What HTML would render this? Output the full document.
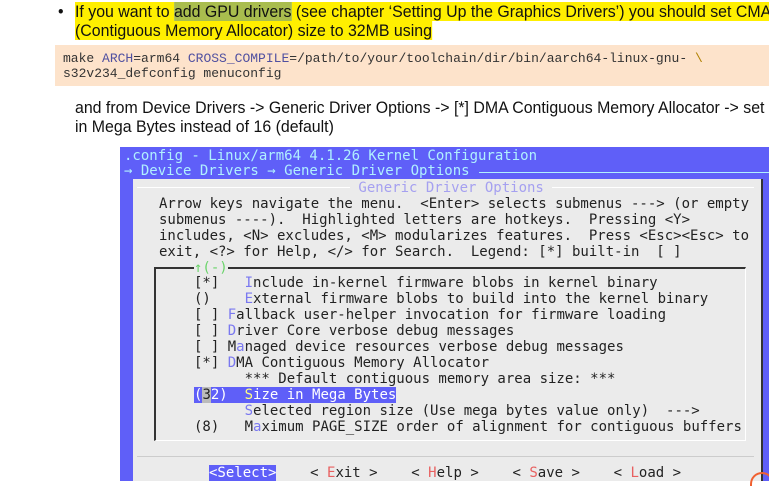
<!DOCTYPE html>
<html><head><meta charset="utf-8"><style>
*{margin:0;padding:0;box-sizing:border-box}
body{width:769px;height:481px;overflow:hidden;background:#fff;position:relative;font-family:"Liberation Sans",sans-serif}
.t{position:absolute;font-size:17px;color:#111;white-space:nowrap;transform:scaleX(0.935);transform-origin:0 0}
.y{background:#ffef00}
.g{background:#a9bd4e}
.code{position:absolute;left:55px;top:45px;width:714px;height:41px;background:#fde3cb}
.c{position:absolute;font-family:"Liberation Mono",monospace;font-size:13px;color:#333;white-space:pre}
.term{position:absolute;left:120px;top:147px;width:649px;height:334px;background:#5f5ff8}
.m{position:absolute;font-family:"DejaVu Sans Mono",monospace;font-size:14px;line-height:16px;white-space:pre;color:#222}
.hk{color:#7a78f0}
.rd{color:#e86060}
</style></head><body>
<div class="t" style="left:58px;top:2px">•</div>
<div class="t" style="left:75px;top:2px"><span class="y">If you want to </span><span class="g">add GPU drivers</span><span class="y"> (see chapter ‘Setting Up the Graphics Drivers’) you should set CMA</span></div>
<div class="t" style="left:75px;top:21px"><span class="y">(Contiguous Memory Allocator) size to 32MB using</span></div>
<div class="code"></div>
<div class="c" style="left:63px;top:51px">make <span style="color:#5050a0">ARCH</span>=arm64 <span style="color:#5050a0">CROSS_COMPILE</span>=/path/to/your/toolchain/dir/bin/aarch64-linux-gnu- <span style="color:#b08000">\</span></div>
<div class="c" style="left:63px;top:66px">s32v234_defconfig menuconfig</div>
<div class="t" style="left:75px;top:98px">and from Device Drivers -&gt; Generic Driver Options -&gt; [*] DMA Contiguous Memory Allocator -&gt; set c</div>
<div class="t" style="left:75px;top:117px">in Mega Bytes instead of 16 (default)</div>

<div class="term"></div>
<div class="m" style="left:124px;top:148px;color:#b0f0ff">.config - Linux/arm64 4.1.26 Kernel Configuration</div>
<div class="m" style="left:124px;top:163px;color:#b0f0ff">→ Device Drivers → Generic Driver Options</div>
<div style="position:absolute;left:479px;top:172px;width:290px;height:1px;background:#b0f0ff"></div>
<div style="position:absolute;left:133px;top:179px;width:630px;height:302px;background:#ebebeb;border-right:2px solid #333"></div>
<div style="position:absolute;left:137px;top:187px;width:617px;height:1px;background:#fff"></div>
<div class="m" style="left:350px;top:180px;color:#a5a0f0;background:#ebebeb"> Generic Driver Options </div>
<div class="m" style="left:159px;top:196px">Arrow keys navigate the menu.  &lt;Enter&gt; selects submenus ---&gt; (or empty
submenus ----).  Highlighted letters are hotkeys.  Pressing &lt;Y&gt;
includes, &lt;N&gt; excludes, &lt;M&gt; modularizes features.  Press &lt;Esc&gt;&lt;Esc&gt; to
exit, &lt;?&gt; for Help, &lt;/&gt; for Search.  Legend: [*] built-in  [ ]</div>
<div style="position:absolute;left:154px;top:267px;width:592px;height:174px;border:1px solid #ddd;border-top:2px solid #333;border-left:2px solid #333;border-right:1px solid #fff;border-bottom:1px solid #fff"></div>
<div class="m" style="left:194px;top:260px;color:#6ad46a;background:#ebebeb">↑(-)</div>
<div class="m" style="left:194px;top:275px">[*]   <span class="hk">I</span>nclude in-kernel firmware blobs in kernel binary
()    <span class="hk">E</span>xternal firmware blobs to build into the kernel binary
[ ] <span class="hk">F</span>allback user-helper invocation for firmware loading
[ ] <span class="hk">D</span>river Core verbose debug messages
[ ] M<span class="hk">a</span>naged device resources verbose debug messages
[*] <span class="hk">D</span>MA Contiguous Memory Allocator
      *** Default contiguous memory area size: ***
<span style="background:#5f5ff8;color:#fff">(<span style="background:#bbb;color:#222">3</span>2)  <span style="color:#ffff80">S</span>ize in Mega Bytes</span>
      <span class="hk">S</span>elected region size (Use mega bytes value only)  ---&gt;
(8)   M<span class="hk">a</span>ximum PAGE_SIZE order of alignment for contiguous buffers</div>
<div style="position:absolute;left:137px;top:456px;width:617px;height:1px;background:#ccc"></div>
<div class="m" style="left:209px;top:465px"><span style="background:#5f5ff8;color:#fff">&lt;Select&gt;</span>    &lt; <span class="rd">E</span>xit &gt;    &lt; <span class="rd">H</span>elp &gt;    &lt; <span class="rd">S</span>ave &gt;    &lt; <span class="rd">L</span>oad &gt;</div>
<div style="position:absolute;left:750px;top:472px;width:24px;height:14px;border:2px solid #f06030;border-radius:12px 12px 0 0;border-bottom:none"></div>
</body></html>
